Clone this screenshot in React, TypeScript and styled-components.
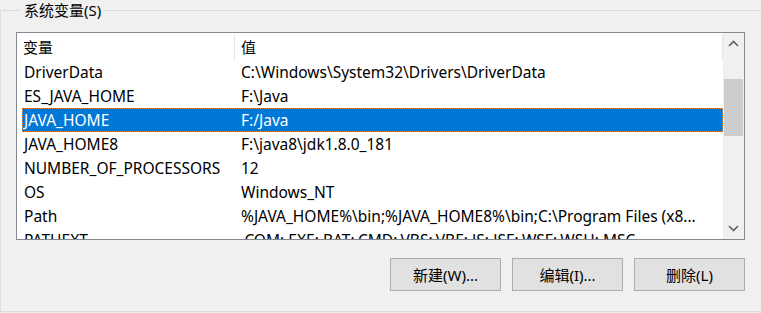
import styled, { createGlobalStyle } from "styled-components"

const GlobalStyle = createGlobalStyle`
    html, body {
        margin: 0;
        padding: 0;
        background: #f0f0f0;
    }
    body {
        font-family: "Noto Sans", "Noto Sans CJK SC", sans-serif;
        font-size: 15px;
        color: #000;
        overflow: hidden;
    }
`

const Page = styled.div`
    width: 761px;
    height: 313px;
    overflow: hidden;
`

const Group = styled.fieldset`
    margin: 0;
    padding: 12px 0 0 15px;
    width: 800px;
    height: 312px;
    box-sizing: border-box;
    border: 1px solid #dcdcdc;
    min-width: 0;
`

const Legend = styled.legend`
    margin-left: 5px;
    padding: 0 3px;
    line-height: 20px;
    font-size: 15px;
`

const ListBox = styled.div`
    width: 729px;
    height: 208px;
    box-sizing: border-box;
    border: 1px solid #828790;
    background: #fff;
    display: flex;
    overflow: hidden;
    font-size: 15.5px;
`

const ListMain = styled.div`
    flex: 1;
    display: flex;
    flex-direction: column;
    overflow: hidden;
`

const Header = styled.div`
    display: flex;
    height: 27px;
    flex-shrink: 0;
`

const HeaderCell = styled.div<{ $width?: number }>`
    ${p => (p.$width ? `width: ${p.$width}px;` : "flex: 1;")}
    box-sizing: border-box;
    margin-top: 1px;
    height: 26px;
    line-height: 27px;
    padding-left: 6px;
    font-size: 15px;
    border-right: 1px solid #e5e5e5;
    white-space: nowrap;
`

const Row = styled.div<{ $selected?: boolean }>`
    display: flex;
    height: 24px;
    line-height: 22px;
    margin-left: 5px;
    box-sizing: border-box;
    flex-shrink: 0;
    white-space: nowrap;
    border: 1px ${p => (p.$selected ? "dotted #ff8728" : "solid transparent")};
    background: ${p => (p.$selected ? "#0078d7" : "transparent")};
    color: ${p => (p.$selected ? "#fff" : "#000")};
`

const NameCell = styled.div`
    width: 211px;
    box-sizing: border-box;
    padding-left: 1px;
    overflow: hidden;
`

const ValueCell = styled.div`
    flex: 1;
    padding-left: 7px;
    overflow: hidden;
`

const ScrollBar = styled.div`
    width: 21px;
    flex-shrink: 0;
    background: #f0f0f0;
    display: flex;
    flex-direction: column;
`

const ArrowButton = styled.div`
    height: 21px;
    flex-shrink: 0;
    display: flex;
    align-items: center;
    justify-content: center;
`

const Track = styled.div`
    flex: 1;
    display: flex;
    flex-direction: column;
`

const Thumb = styled.div<{ $offset: number; $size: number }>`
    margin-top: ${p => p.$offset}px;
    margin-left: 1px;
    width: 19px;
    height: ${p => p.$size}px;
    background: #cdcdcd;
`

const ButtonRow = styled.div`
    width: 729px;
    margin-top: 18px;
    display: flex;
    justify-content: flex-end;
    gap: 11px;
`

const Button = styled.button`
    width: 111px;
    height: 33px;
    box-sizing: border-box;
    background: #e1e1e1;
    border: 1px solid #adadad;
    border-radius: 0;
    font-family: inherit;
    font-size: 15px;
    color: #000;
    padding: 0;
`

const Chevron = ({ up }: { up?: boolean }) => (
    <svg width="11" height="7" viewBox="0 0 11 7">
        <path
            d={up ? "M1 6 L5.5 1.5 L10 6" : "M1 1 L5.5 5.5 L10 1"}
            fill="none"
            stroke="#606060"
            strokeWidth="1.6"
        />
    </svg>
)

const variables = [
    { name: "DriverData", value: "C:\\Windows\\System32\\Drivers\\DriverData" },
    { name: "ES_JAVA_HOME", value: "F:\\Java" },
    { name: "JAVA_HOME", value: "F:/Java", selected: true },
    { name: "JAVA_HOME8", value: "F:\\java8\\jdk1.8.0_181" },
    { name: "NUMBER_OF_PROCESSORS", value: "12" },
    { name: "OS", value: "Windows_NT" },
    { name: "Path", value: "%JAVA_HOME%\\bin;%JAVA_HOME8%\\bin;C:\\Program Files (x8..." },
    { name: "PATHEXT", value: ".COM;.EXE;.BAT;.CMD;.VBS;.VBE;.JS;.JSE;.WSF;.WSH;.MSC" },
]

export default function App() {
    return (
        <Page>
            <GlobalStyle />
            <Group>
                <Legend>系统变量(S)</Legend>

                <ListBox>
                    <ListMain>
                        <Header>
                            <HeaderCell $width={218}>变量</HeaderCell>
                            <HeaderCell>值</HeaderCell>
                        </Header>
                        {variables.map(v => (
                            <Row key={v.name} $selected={v.selected}>
                                <NameCell>{v.name}</NameCell>
                                <ValueCell>{v.value}</ValueCell>
                            </Row>
                        ))}
                    </ListMain>
                    <ScrollBar>
                        <ArrowButton><Chevron up /></ArrowButton>
                        <Track>
                            <Thumb $offset={25} $size={57} />
                        </Track>
                        <ArrowButton><Chevron /></ArrowButton>
                    </ScrollBar>
                </ListBox>

                <ButtonRow>
                    <Button>新建(W)...</Button>
                    <Button>编辑(I)...</Button>
                    <Button>删除(L)</Button>
                </ButtonRow>
            </Group>
        </Page>
    )
}
